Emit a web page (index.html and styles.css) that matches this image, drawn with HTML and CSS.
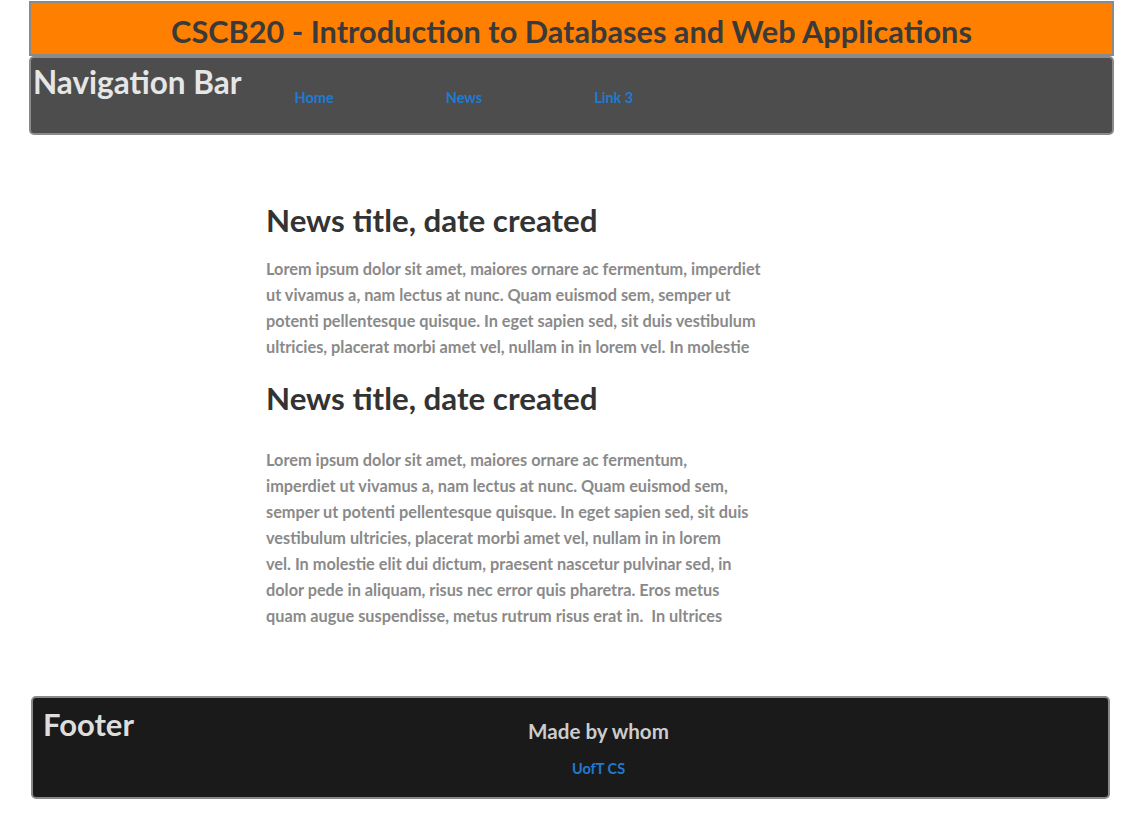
FILE: index.html
```html
<!DOCTYPE html>
<html lang="en">
<head>
<meta charset="utf-8">
<title>CSCB20 - News</title>
<link rel="stylesheet" href="styles.css">
</head>
<body>
<div class="page">
  <header class="banner">
    <h1 class="banner-title">CSCB20 - Introduction to Databases and Web Applications</h1>
  </header>
  <nav class="navbar">
    <h2 class="nav-title">Navigation Bar</h2>
    <ul class="nav-links">
      <li><a href="#">Home</a></li>
      <li><a href="#">News</a></li>
      <li><a href="#">Link 3</a></li>
    </ul>
  </nav>
  <main class="content">
    <article class="news news-first">
      <h2 class="news-title">News title, date created</h2>
      <p class="news-text">Lorem ipsum dolor sit amet, maiores ornare ac fermentum, imperdiet ut vivamus a, nam lectus at nunc. Quam euismod sem, semper ut potenti pellentesque quisque. In eget sapien sed, sit duis vestibulum ultricies, placerat morbi amet vel, nullam in in lorem vel. In molestie</p>
    </article>
    <article class="news news-second">
      <h2 class="news-title">News title, date created</h2>
      <p class="news-text">Lorem ipsum dolor sit amet, maiores ornare ac fermentum, imperdiet ut vivamus a, nam lectus at nunc. Quam euismod sem, semper ut potenti pellentesque quisque. In eget sapien sed, sit duis vestibulum ultricies, placerat morbi amet vel, nullam in in lorem vel. In molestie elit dui dictum, praesent nascetur pulvinar sed, in dolor pede in aliquam, risus nec error quis pharetra. Eros metus quam augue suspendisse, metus rutrum risus erat in.&nbsp; In ultrices</p>
    </article>
  </main>
  <footer class="footer">
    <h2 class="footer-title">Footer</h2>
    <div class="footer-body">
      <h3 class="footer-made">Made by whom</h3>
      <a class="footer-link" href="#">UofT CS</a>
    </div>
  </footer>
</div>
</body>
</html>
```

FILE: styles.css
```css
html, body {
  margin: 0;
  padding: 0;
  background: #ffffff;
}

body {
  font-family: Lato, "Open Sans", "Liberation Sans", sans-serif;
  font-weight: 700;
}

.page {
  padding: 1px 20px 0 29px;
}

.banner {
  background: #ff8000;
  border: 2px solid #8a8a8a;
  height: 51px;
  box-sizing: content-box;
  display: flex;
  align-items: center;
  justify-content: center;
}

.banner-title {
  margin: 6px 0 0 0;
  font-size: 30.7px;
  color: #3a3a3a;
  font-weight: 700;
}

.navbar {
  background: #4d4d4d;
  border: 2px solid #8a8a8a;
  border-radius: 5px;
  height: 75px;
  display: flex;
  align-items: flex-start;
}

.nav-title {
  margin: 5px 0 0 2px;
  font-size: 31.5px;
  color: #e6e6e6;
  font-weight: 700;
}

.nav-links {
  list-style: none;
  margin: 29px 0 0 53px;
  padding: 0;
  display: flex;
  gap: 112px;
}

.nav-links a {
  color: #1f7bd1;
  text-decoration: none;
  font-size: 14.5px;
  font-weight: 700;
}

.content {
  padding: 66px 0 0 237px;
  height: 495px;
}

.news-title {
  margin: 0;
  font-size: 31.3px;
  line-height: 38px;
  color: #333333;
  font-weight: 700;
}

.news-text {
  margin: 0;
  font-size: 16.3px;
  line-height: 26px;
  color: #8a8a8a;
  font-weight: 700;
}

.news-first .news-text {
  width: 502px;
  margin-top: 17px;
}

.news-second {
  margin-top: 19px;
}

.news-second .news-text {
  width: 483px;
  margin-top: 30px;
}

.footer {
  margin: 0 4px 0 2px;
  background: #1a1a1a;
  border: 2px solid #8a8a8a;
  border-radius: 5px;
  height: 99px;
  display: flex;
}

.footer-title {
  margin: 7px 0 0 10px;
  font-size: 31px;
  color: #dddddd;
  font-weight: 700;
  width: 120px;
}

.footer-body {
  flex: 1;
  display: flex;
  flex-direction: column;
  align-items: center;
  padding-right: 74px;
}

.footer-made {
  margin: 21px 0 0 0;
  font-size: 20.6px;
  color: #cccccc;
  font-weight: 700;
}

.footer-link {
  margin-top: 17px;
  color: #1f7bd1;
  text-decoration: none;
  font-size: 14.5px;
  font-weight: 700;
}
```
